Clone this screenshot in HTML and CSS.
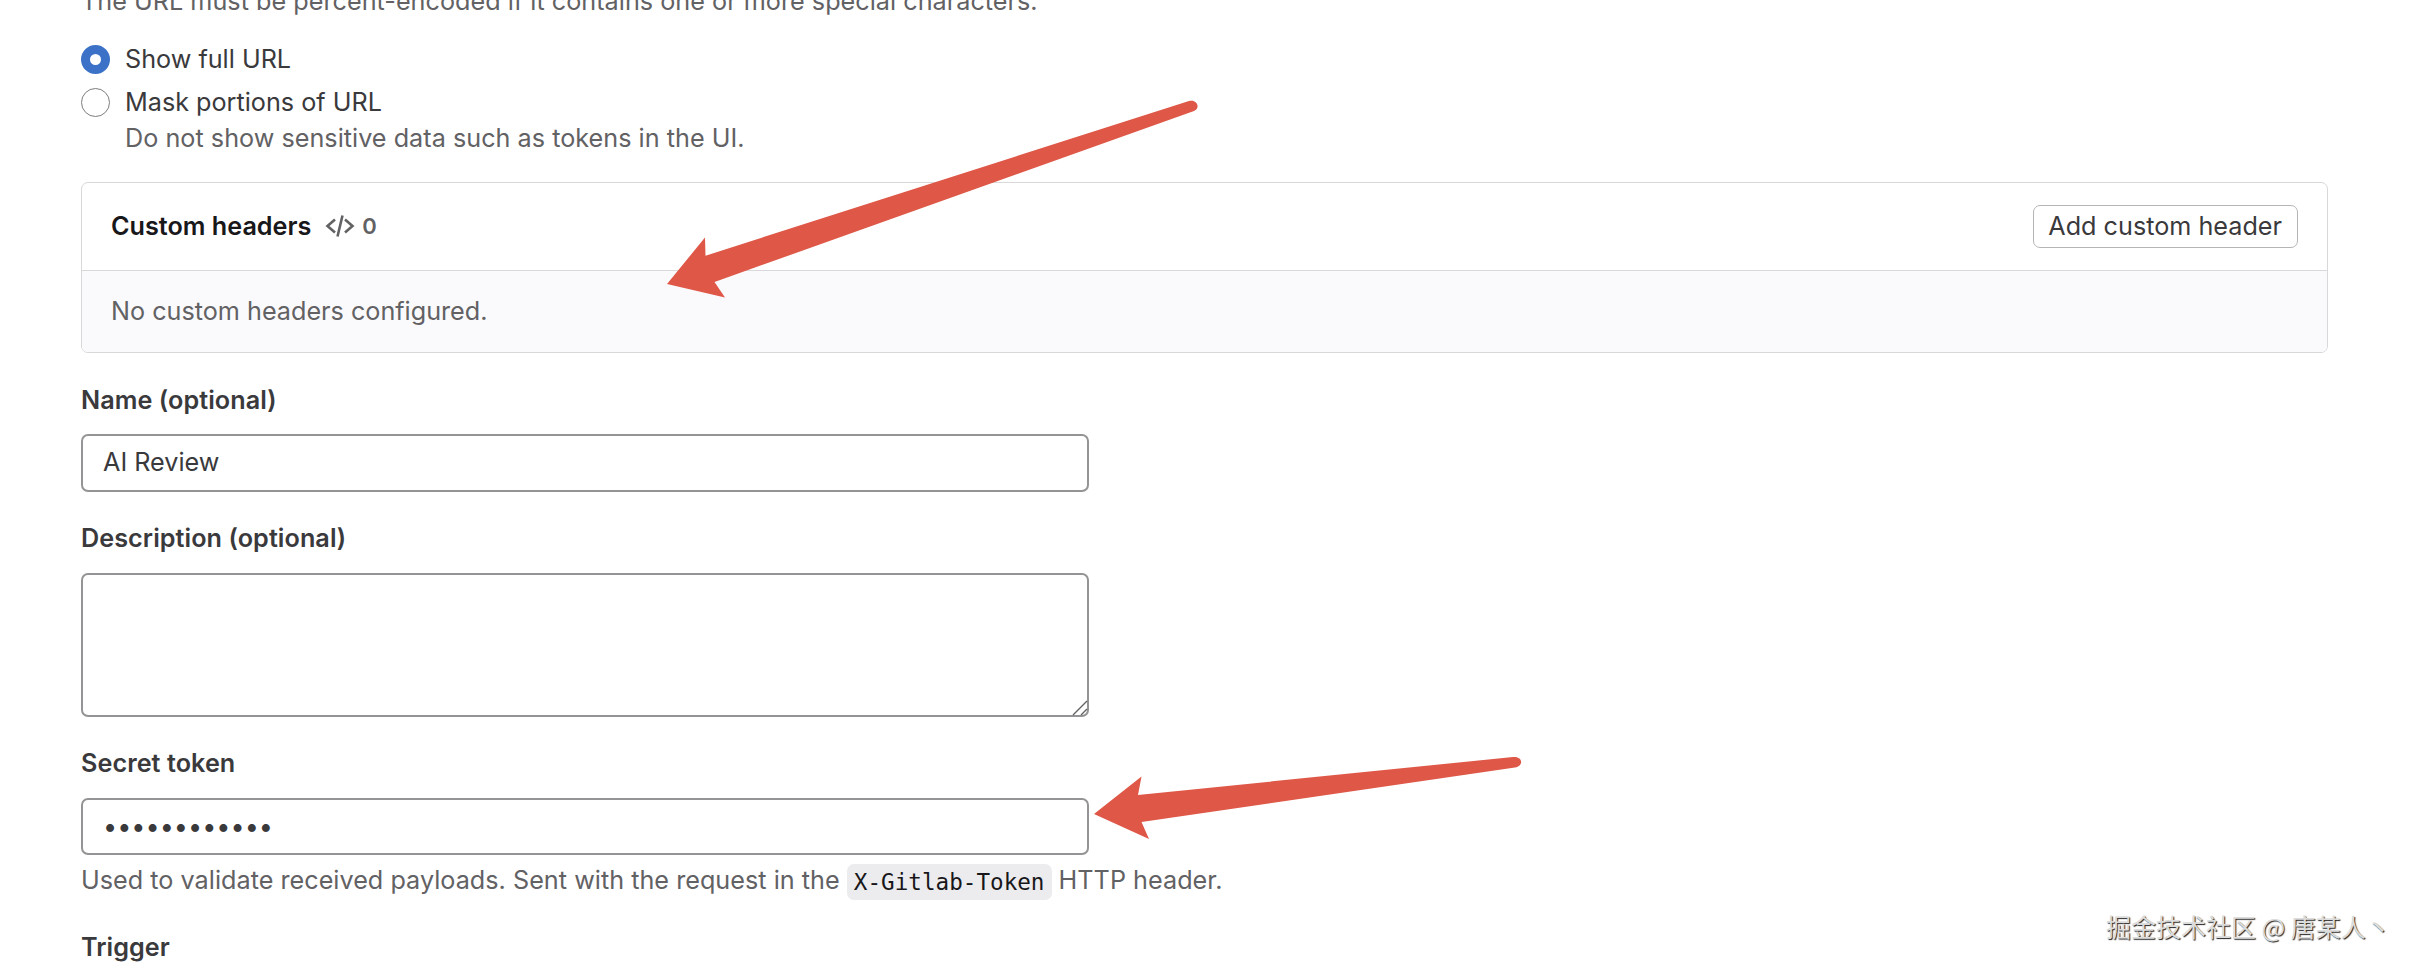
FILE: index.html
```
<!doctype html>
<html lang="en">
 <head>
  <meta charset="UTF-8">
  <title>Webhook</title>
  <link rel="stylesheet" href="styles.css">
 </head>
 <body>

	<form class="hook">
		<p class="help url_help">The URL must be percent-encoded if it contains one or more special characters.</p>

		<!-- URL masking -->
		<div class="radios">
			<label class="radio_row">
				<input class="radio" type="radio" name="mask" checked>
				<span>Show full URL</span>
			</label>
			<label class="radio_row">
				<input class="radio" type="radio" name="mask">
				<span>Mask portions of URL<span class="help radio_help">Do not show sensitive data such as tokens in the UI.</span></span>
			</label>
		</div>

		<!-- custom headers -->
		<section class="card">
			<div class="card_head">
				<h2 class="card_title">Custom headers</h2>
				<svg class="code_icon" viewBox="0 0 30 24" fill="none" stroke="#626164" stroke-width="2.6">
					<path d="M10 5.5 2.5 12l7.500 6.500M20 5.500l7.500 6.500-7.500 6.500M17.500 1.500l-5 21"/>
				</svg>
				<span class="count">0</span>
				<button class="add_btn" type="button">Add custom header</button>
			</div>
			<div class="card_body">No custom headers configured.</div>
		</section>

		<div class="field">
			<label class="label" for="name">Name (optional)</label>
			<input class="input" id="name" type="text" value="AI Review">
		</div>

		<div class="field">
			<label class="label" for="desc">Description (optional)</label>
			<div class="area">
				<textarea class="input textarea" id="desc"></textarea>
				<svg class="grip" width="16" height="16" viewBox="0 0 16 16" fill="none" stroke="#626164" stroke-width="1.4">
					<path d="M1 15 15 1M9 15l6-6"/>
				</svg>
			</div>
		</div>

		<div class="field token_field">
			<label class="label" for="token">Secret token</label>
			<input class="input token" id="token" type="password" value="abcdefghijkl">
			<p class="help token_help">Used to validate received payloads. Sent with the request in the <code class="code">X-Gitlab-Token</code> HTTP header.</p>
		</div>

		<div class="label">Trigger</div>
	</form>

	<!-- arrows -->
	<svg class="arrows" width="2418" height="968" viewBox="0 0 2418 968" fill="#de5747">
		<path d="M667 284 705 237.500 705.500 255.700 1189 101C1197 99 1201 108 1194 111L714.500 282 725 297.500Z"/>
		<path d="M1094 814 1141.500 776.500 1138 795 1513 757C1523 756 1524 766 1515 767.500L1141.500 822 1149 839Z"/>
	</svg>

	<div class="mark">掘金技术社区 @ 唐某人丶</div>
 </body>
</html>
```
FILE: styles.css
```
* {
box-sizing: border-box;
}

body {
margin: 0;
height: 968px;
overflow: hidden;
position: relative;
background: #fff;
color: #3a393c;
font-family: Inter, "Liberation Sans", sans-serif;
font-size: 25.2px;
line-height: 36px;
}

p,h2 {
margin: 0;
}

.hook {
display: flow-root;
width: 2247px;
margin-left: 81px;
}

.help {
color: #626164;
letter-spacing: 0.02px;
}

.url_help {
margin-top: -17px;
margin-bottom: 22px;
}

/* radio buttons */
.radios {
display: flex;
flex-direction: column;
gap: 7px;
}

.radio_row {
display: flex;
gap: 15px;
}

.radio {
appearance: none;
flex: none;
width: 29px;
height: 29px;
margin: 4px 0 0;
border: 1px solid #7d7d7f;
border-radius: 50%;
background: #fff;
}

.radio:checked {
border: 9px solid #3b72c8;
}

.radio_help {
display: block;
}

/* custom headers card */
.card {
margin: 26px 0 29px;
border: 1px solid #d8d8da;
border-radius: 7px;
overflow: hidden;
}

.card_head {
display: flex;
align-items: center;
height: 88px;
padding: 0 29px 1px;
border-bottom: 1px solid #d8d8da;
}

.card_title {
color: #18171a;
font-size: 25.2px;
font-weight: 600;
}

.code_icon {
width: 30px;
height: 24px;
margin: 0 7px 0 14px;
}

.count {
color: #626164;
font-size: 22px;
font-weight: 600;
}

.add_btn {
height: 43px;
margin-left: auto;
padding: 0 15px 1px 14px;
border: 1px solid #b5b5b8;
border-radius: 7px;
background: #fff;
color: #3a393c;
font: inherit;
}

.card_body {
padding: 22px 29px 23px;
background: #fafafc;
color: #626164;
}

/* form fields */
.field {
width: 1008px;
margin-bottom: 28px;
}

.label {
display: block;
font-weight: 600;
letter-spacing: 0.06px;
}

.input {
display: block;
width: 100%;
height: 58px;
margin: 16px 0 0;
padding: 0 20px 3px;
border: 2px solid #949496;
border-radius: 7px;
background: #fff;
color: #3a393c;
font: inherit;
outline: none;
}

.area {
position: relative;
}

.textarea {
height: 144px;
margin-top: 17px;
resize: none;
}

.grip {
position: absolute;
right: 1px;
bottom: 1px;
}

.token_field {
width: auto;
margin-bottom: 30px;
}

.token {
width: 1008px;
height: 57px;
margin-top: 17px;
padding-bottom: 1px;
}

.token_help {
margin-top: 7px;
}

.code {
position: relative;
top: 1px;
padding: 5px 7px;
border-radius: 7px;
background: #ececee;
color: #18171a;
font-family: "DejaVu Sans Mono", monospace;
font-size: 22.6px;
}

.arrows {
position: absolute;
left: 0;
top: 0;
pointer-events: none;
}

.mark {
position: absolute;
left: 2106px;
top: 908px;
color: #dcdcdc;
font-family: "Noto Sans CJK SC", sans-serif;
font-size: 25px;
white-space: nowrap;
text-shadow: 1px 1px 1px #222;
}
```
